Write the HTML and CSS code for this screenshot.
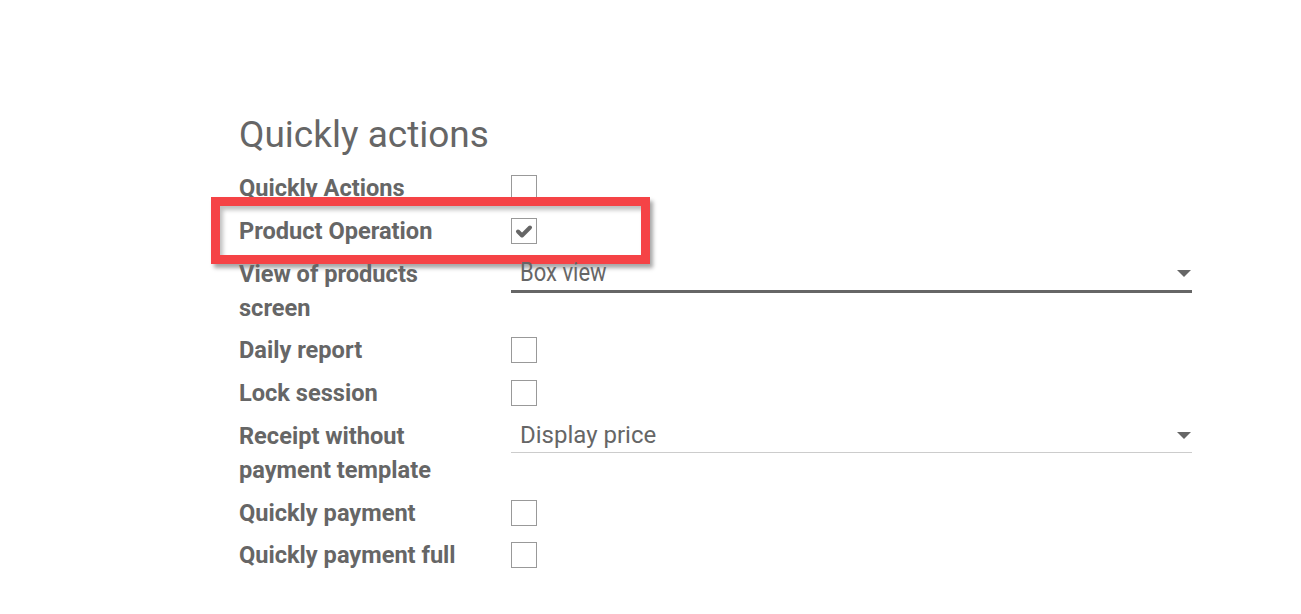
FILE: index.html
```html
<!DOCTYPE html>
<html>
<head>
<meta charset="utf-8">
<link rel="stylesheet" href="styles.css">
</head>
<body>
<div class="page">
  <h2 class="title">Quickly actions</h2>
  <div class="form">
    <div class="row">
      <div class="label">Quickly Actions</div>
      <div class="field"><span class="cb"></span></div>
    </div>
    <div class="row highlight">
      <div class="label">Product Operation</div>
      <div class="field"><span class="cb checked"><svg viewBox="0 0 26 26" width="26" height="26"><path d="M7 13.5 L11 17.5 L19 9.5" fill="none" stroke="#666" stroke-width="4" stroke-linecap="round" stroke-linejoin="round"/></svg></span></div>
      <div class="redbox"></div>
    </div>
    <div class="row">
      <div class="label">View of products screen</div>
      <div class="field"><div class="select focused"><span class="val condensed">Box view</span><span class="caret"></span></div></div>
    </div>
    <div class="row">
      <div class="label">Daily report</div>
      <div class="field"><span class="cb"></span></div>
    </div>
    <div class="row">
      <div class="label">Lock session</div>
      <div class="field"><span class="cb"></span></div>
    </div>
    <div class="row">
      <div class="label">Receipt without payment template</div>
      <div class="field"><div class="select"><span class="val">Display price</span><span class="caret"></span></div></div>
    </div>
    <div class="row">
      <div class="label">Quickly payment</div>
      <div class="field"><span class="cb"></span></div>
    </div>
    <div class="row">
      <div class="label">Quickly payment full</div>
      <div class="field"><span class="cb"></span></div>
    </div>
  </div>
</div>
</body>
</html>
```
FILE: styles.css
```css
html, body {
  margin: 0;
  padding: 0;
  background: #fff;
}
body {
  font-family: Roboto, "Liberation Sans", sans-serif;
  color: #666;
}
.page {
  padding: 111px 0 0 239px;
  width: 953px;
}
.title {
  margin: 0 0 8px 0;
  font-size: 37px;
  font-weight: 400;
  line-height: 48px;
  color: #666;
}
.form {
  display: flex;
  flex-direction: column;
}
.row {
  position: relative;
  display: flex;
  align-items: flex-start;
  padding: 4px 0 4.75px 0;
}
.label {
  width: 235px;
  margin-right: 37px;
  font-size: 23.6px;
  font-weight: 700;
  line-height: 34px;
  color: #666;
}
.field {
  flex: 1;
  min-height: 34px;
  display: flex;
  align-items: center;
}
.cb {
  display: block;
  width: 24px;
  height: 24px;
  border: 1px solid #999;
  background: #fff;
  box-sizing: content-box;
}
.cb svg {
  display: block;
  margin: -1px;
}
.select {
  flex: 1;
  display: flex;
  align-items: center;
  justify-content: space-between;
  height: 33px;
  margin-top: 0;
  border-bottom: 1px solid #ccc;
  padding: 0 8px 0 9px;
}
.select.focused {
  border-bottom: 3px solid #666;
  height: 33px;
}
.val {
  font-size: 24px;
  color: #666;
  line-height: 30px;
}
.condensed {
  display: inline-block;
  font-size: 25px;
  transform: scaleX(0.88);
  transform-origin: left center;
}
.caret {
  width: 0;
  height: 0;
  border-left: 7px solid transparent;
  border-right: 7px solid transparent;
  border-top: 7px solid #666;
  margin-right: -7px;
}
.redbox {
  position: absolute;
  left: -28px;
  top: -13px;
  width: 421px;
  height: 49px;
  border: 9px solid #f54346;
  box-shadow: 3px 4px 4px rgba(0,0,0,0.35), inset 3px 4px 4px rgba(0,0,0,0.25);
  pointer-events: none;
}
```
